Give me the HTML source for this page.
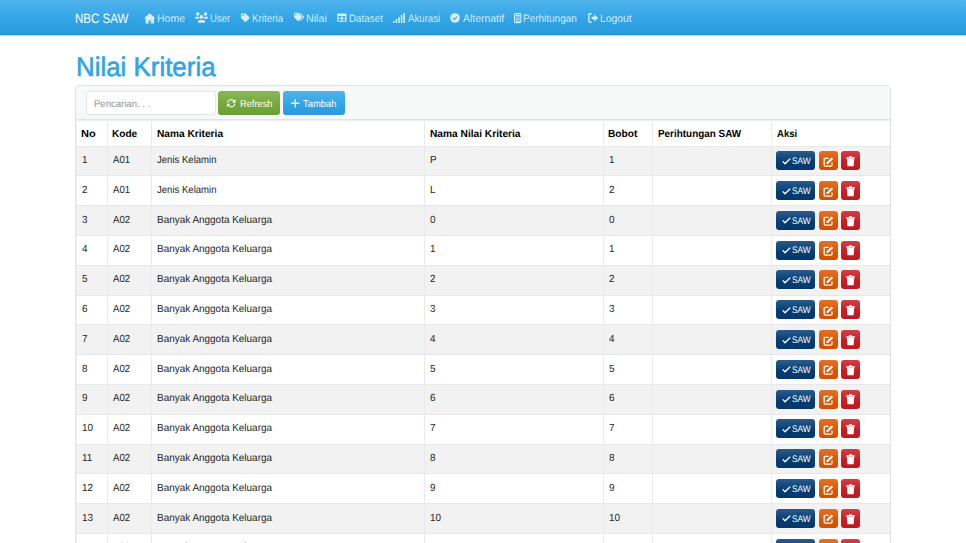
<!DOCTYPE html>
<html><head><meta charset="utf-8"><title>Nilai Kriteria</title><style>
html,body{margin:0;padding:0;background:#fff;width:966px;height:543px;overflow:hidden;position:relative;font-family:"Liberation Sans",sans-serif;text-rendering:geometricPrecision}
.t{position:absolute;white-space:nowrap;transform-origin:0 0}
.i{position:absolute;overflow:visible}
#nav{position:absolute;left:0;top:0;width:966px;height:34px;background:linear-gradient(#50b3eb,#2fa4e7 60%,#2c9ad9);border-bottom:1px solid #2190d3;box-shadow:0 1px 0 rgba(33,144,211,0.3)}
#panel{position:absolute;left:75px;top:85px;width:814px;height:600px;border:1px solid #dfe2e5;border-radius:4px}
#phead{position:absolute;left:76px;top:86px;width:814px;height:33px;background:#f7f8f8;border-bottom:1px solid #e1e3e5;border-radius:3px 3px 0 0}
#tline{position:absolute;left:76px;top:120px;width:814px;height:1px;background:#eceef0}
#search{position:absolute;left:86px;top:91px;width:128px;height:22px;background:#fff;border:1px solid #e3e5e8;border-radius:3px}
.btn{position:absolute;border-radius:3px;box-sizing:border-box}
.ok{background:linear-gradient(#8ab659,#73a839 60%,#6c9e36)}
.pr{background:linear-gradient(#50b3eb,#2fa4e7 60%,#2c9ad9)}
.info{background:linear-gradient(#2b5b8a,#033c73 60%,#03386c)}
.warn{background:linear-gradient(#e27129,#dd5600 60%,#d05100)}
.dang{background:linear-gradient(#d04045,#c71c22 60%,#bb1a20)}
.stripe{position:absolute;left:76px;width:814px;background:#f2f2f2}
.hl{position:absolute;left:76px;width:814px;height:1px;background:#e6e8ea}
.vl{position:absolute;top:120px;width:1px;height:430px;background:#e8ebee}
</style></head>
<body>
<div id="nav"></div>
<div class="t" style="left:74.69px;top:10.80px;font-size:13.6px;line-height:15px;color:#fff;transform:scaleX(0.8480);">NBC SAW</div>
<svg class="i" style="left:144px;top:12.5px;width:11.5px;height:10.5px" viewBox="0 0 23 21"><path fill="rgba(255,255,255,0.8)" d="M11.5 0.3L23 10.6H20V21H13.6V15.2H9.4V21H3V10.6H0Z"/></svg>
<div class="t" style="left:157.42px;top:13.00px;font-size:10.8px;line-height:12px;color:rgba(255,255,255,0.8);transform:scaleX(0.9715);">Home</div>
<svg class="i" style="left:192px;top:10px;width:20px;height:15px" viewBox="0 0 20 15"><g fill="rgba(255,255,255,0.8)"><circle cx="5.7" cy="4.1" r="1.75"/><circle cx="13.5" cy="4.1" r="1.75"/><rect x="3" y="6.7" width="4.3" height="2.1" rx="1"/><rect x="11.9" y="6.7" width="4.2" height="2.1" rx="1"/><circle cx="9.5" cy="6.9" r="1.9"/><path d="M5.9 12.8V11.7Q5.9 9.9 7.7 9.9H11.3Q13.1 9.9 13.1 11.7V12.8Z"/></g></svg>
<div class="t" style="left:210.30px;top:13.00px;font-size:10.8px;line-height:12px;color:rgba(255,255,255,0.8);transform:scaleX(0.8824);">User</div>
<svg class="i" style="left:240.7px;top:12.6px;width:8.6px;height:9.6px" viewBox="0 0 512 512"><path fill="rgba(255,255,255,0.8)" d="M0 252.118V48C0 21.49 21.49 0 48 0h204.118a48 48 0 0 1 33.941 14.059l211.882 211.882c18.745 18.745 18.745 49.137 0 67.882L293.823 497.941c-18.745 18.745-49.137 18.745-67.882 0L14.059 286.059A48 48 0 0 1 0 252.118zM112 64c-26.51 0-48 21.49-48 48s21.49 48 48 48 48-21.49 48-48-21.49-48-48-48z"/></svg>
<div class="t" style="left:251.95px;top:13.00px;font-size:10.8px;line-height:12px;color:rgba(255,255,255,0.8);transform:scaleX(0.9091);">Kriteria</div>
<svg class="i" style="left:294px;top:12.3px;width:10.3px;height:9.9px" viewBox="0 0 640 512"><path fill="rgba(255,255,255,0.8)" d="M497.941 225.941L286.059 14.059A48 48 0 0 0 252.118 0H48C21.49 0 0 21.49 0 48v204.118a48 48 0 0 0 14.059 33.941l211.882 211.882c18.744 18.745 49.136 18.746 67.882 0l204.118-204.118c18.745-18.745 18.745-49.137 0-67.882zM112 160c-26.51 0-48-21.49-48-48s21.49-48 48-48 48 21.49 48 48-21.49 48-48 48zm513.941 133.823L421.823 497.941c-18.745 18.745-49.137 18.745-67.882 0l-.36-.36L527.64 323.522c16.999-16.999 26.36-39.6 26.36-63.64s-9.362-46.641-26.36-63.64L331.397 0h48.721a48 48 0 0 1 33.941 14.059l211.882 211.882c18.745 18.745 18.745 49.137 0 67.882z"/></svg>
<div class="t" style="left:305.73px;top:13.00px;font-size:10.8px;line-height:12px;color:rgba(255,255,255,0.8);transform:scaleX(0.9893);">Nilai</div>
<svg class="i" style="left:337px;top:12.6px;width:9.8px;height:9.4px" viewBox="0 0 512 512"><path fill="rgba(255,255,255,0.8)" d="M464 32H48C21.49 32 0 53.49 0 80v352c0 26.51 21.49 48 48 48h416c26.51 0 48-21.49 48-48V80c0-26.51-21.49-48-48-48zM224 416H64v-96h160v96zm0-160H64v-96h160v96zm224 160H288v-96h160v96zm0-160H288v-96h160v96z"/></svg>
<div class="t" style="left:348.80px;top:13.00px;font-size:10.8px;line-height:12px;color:rgba(255,255,255,0.8);transform:scaleX(0.9114);">Dataset</div>
<svg class="i" style="left:393px;top:12.5px;width:12px;height:10px" viewBox="0 0 12 10"><rect x="0.0" y="8" width="1.6" height="2" fill="rgba(255,255,255,0.8)"/><rect x="2.6" y="6" width="1.6" height="4" fill="rgba(255,255,255,0.8)"/><rect x="5.2" y="4" width="1.6" height="6" fill="rgba(255,255,255,0.8)"/><rect x="7.8" y="2" width="1.6" height="8" fill="rgba(255,255,255,0.8)"/><rect x="10.4" y="0" width="1.6" height="10" fill="rgba(255,255,255,0.8)"/></svg>
<div class="t" style="left:407.85px;top:13.00px;font-size:10.8px;line-height:12px;color:rgba(255,255,255,0.8);transform:scaleX(0.8940);">Akurasi</div>
<svg class="i" style="left:450px;top:12.8px;width:10px;height:10px" viewBox="0 0 10 10"><circle cx="5" cy="5" r="4.85" fill="rgba(255,255,255,0.8)"/><path d="M2.9 5.1L4.4 6.5L7.2 3.6" fill="none" stroke="#3aa7e8" stroke-width="1.15"/></svg>
<div class="t" style="left:463.00px;top:13.00px;font-size:10.8px;line-height:12px;color:rgba(255,255,255,0.8);transform:scaleX(0.9664);">Alternatif</div>
<svg class="i" style="left:514px;top:12.8px;width:7.4px;height:10.2px" viewBox="0 0 7.4 10.2"><rect x="0.55" y="0.55" width="6.3" height="9.1" rx="0.9" fill="none" stroke="rgba(255,255,255,0.8)" stroke-width="1.1"/><rect x="1.7" y="1.7" width="4" height="1.7" fill="rgba(255,255,255,0.8)"/><rect x="1.70" y="4.30" width="1.1" height="1.2" fill="rgba(255,255,255,0.8)"/><rect x="3.15" y="4.30" width="1.1" height="1.2" fill="rgba(255,255,255,0.8)"/><rect x="4.60" y="4.30" width="1.1" height="1.2" fill="rgba(255,255,255,0.8)"/><rect x="1.70" y="6.05" width="1.1" height="1.2" fill="rgba(255,255,255,0.8)"/><rect x="3.15" y="6.05" width="1.1" height="1.2" fill="rgba(255,255,255,0.8)"/><rect x="4.60" y="6.05" width="1.1" height="1.2" fill="rgba(255,255,255,0.8)"/><rect x="1.70" y="7.80" width="1.1" height="1.2" fill="rgba(255,255,255,0.8)"/><rect x="3.15" y="7.80" width="1.1" height="1.2" fill="rgba(255,255,255,0.8)"/><rect x="4.60" y="7.80" width="1.1" height="1.2" fill="rgba(255,255,255,0.8)"/></svg>
<div class="t" style="left:523.27px;top:13.00px;font-size:10.8px;line-height:12px;color:rgba(255,255,255,0.8);transform:scaleX(0.9243);">Perhitungan</div>
<svg class="i" style="left:587.5px;top:12.5px;width:10.5px;height:10px" viewBox="0 0 10.5 10"><path d="M3.6 0.8H1.9Q0.8 0.8 0.8 1.9V8.1Q0.8 9.2 1.9 9.2H3.6" fill="none" stroke="rgba(255,255,255,0.8)" stroke-width="1.4"/><path fill="rgba(255,255,255,0.8)" d="M3.6 3.7H6.2V1.4L10.2 5L6.2 8.6V6.3H3.6Z"/></svg>
<div class="t" style="left:599.60px;top:13.00px;font-size:10.8px;line-height:12px;color:rgba(255,255,255,0.8);transform:scaleX(0.9605);">Logout</div>
<div class="t" style="left:75.71px;top:51.50px;font-size:26.7px;line-height:30px;color:#2fa4e7;transform:scaleX(0.9700);-webkit-text-stroke:0.6px #2fa4e7;">Nilai Kriteria</div>
<div id="panel"></div><div id="phead"></div><div id="tline"></div>
<div id="search"></div>
<div class="t" style="left:93.98px;top:99.00px;font-size:10px;line-height:11px;color:#8f9399;transform:scaleX(0.9536);">Pencarian. . .</div>
<div class="btn ok" style="left:218px;top:91px;width:62px;height:23.5px"></div>
<svg class="i" style="left:226px;top:98px;width:10.5px;height:10.5px" viewBox="0 0 10.5 10.5"><path d="M1.6 4.7A3.6 3.6 0 0 1 8.1 3.2M8.9 5.8A3.6 3.6 0 0 1 2.4 7.3" fill="none" stroke="#fff" stroke-width="1.1"/><path d="M9.6 1.3V4.8H6.1Z M0.9 9.2V5.7H4.4Z" fill="#fff"/></svg>
<div class="t" style="left:239.98px;top:99.00px;font-size:10px;line-height:11px;color:#fff;transform:scaleX(0.9258);">Refresh</div>
<div class="btn pr" style="left:283px;top:91px;width:62px;height:23.5px"></div>
<svg class="i" style="left:291px;top:99px;width:8.4px;height:8.4px" viewBox="0 0 8.4 8.4"><path d="M4.2 0V8.4M0 4.2H8.4" stroke="#fff" stroke-width="1.15"/></svg>
<div class="t" style="left:303.00px;top:99.00px;font-size:10px;line-height:11px;color:#fff;transform:scaleX(0.9399);">Tambah</div>
<div class="stripe" style="top:146.00px;height:29.8px"></div>
<div class="stripe" style="top:205.60px;height:29.8px"></div>
<div class="stripe" style="top:265.20px;height:29.8px"></div>
<div class="stripe" style="top:324.80px;height:29.8px"></div>
<div class="stripe" style="top:384.40px;height:29.8px"></div>
<div class="stripe" style="top:444.00px;height:29.8px"></div>
<div class="stripe" style="top:503.60px;height:29.8px"></div>
<div class="hl" style="top:145.50px"></div>
<div class="hl" style="top:175.30px"></div>
<div class="hl" style="top:205.10px"></div>
<div class="hl" style="top:234.90px"></div>
<div class="hl" style="top:264.70px"></div>
<div class="hl" style="top:294.50px"></div>
<div class="hl" style="top:324.30px"></div>
<div class="hl" style="top:354.10px"></div>
<div class="hl" style="top:383.90px"></div>
<div class="hl" style="top:413.70px"></div>
<div class="hl" style="top:443.50px"></div>
<div class="hl" style="top:473.30px"></div>
<div class="hl" style="top:503.10px"></div>
<div class="hl" style="top:532.90px"></div>
<div class="hl" style="top:562.70px"></div>
<div class="vl" style="left:107px"></div>
<div class="vl" style="left:151px"></div>
<div class="vl" style="left:424px"></div>
<div class="vl" style="left:603px"></div>
<div class="vl" style="left:652px"></div>
<div class="vl" style="left:771px"></div>
<div class="vl" style="left:76px;background:#f0f2f4"></div>
<div class="t" style="left:80.93px;top:129.00px;font-size:10.3px;line-height:11px;color:#000;font-weight:bold;transform:scaleX(1.0709);">No</div>
<div class="t" style="left:112.40px;top:129.00px;font-size:10.3px;line-height:11px;color:#000;font-weight:bold;transform:scaleX(0.9772);">Kode</div>
<div class="t" style="left:156.54px;top:129.00px;font-size:10.3px;line-height:11px;color:#000;font-weight:bold;transform:scaleX(0.9860);">Nama Kriteria</div>
<div class="t" style="left:429.53px;top:129.00px;font-size:10.3px;line-height:11px;color:#000;font-weight:bold;transform:scaleX(0.9883);">Nama Nilai Kriteria</div>
<div class="t" style="left:607.75px;top:129.00px;font-size:10.3px;line-height:11px;color:#000;font-weight:bold;transform:scaleX(0.9856);">Bobot</div>
<div class="t" style="left:657.55px;top:129.00px;font-size:10.3px;line-height:11px;color:#000;font-weight:bold;transform:scaleX(0.9624);">Perihtungan SAW</div>
<div class="t" style="left:776.67px;top:129.00px;font-size:10.3px;line-height:11px;color:#000;font-weight:bold;transform:scaleX(0.9247);">Aksi</div>
<div class="t" style="left:82.00px;top:155.00px;font-size:10.3px;line-height:11px;color:#212529;transform:scaleX(0.9600);">1</div>
<div class="t" style="left:112.88px;top:155.00px;font-size:10.3px;line-height:11px;color:#212529;transform:scaleX(0.9288);">A01</div>
<div class="t" style="left:156.88px;top:155.00px;font-size:10.3px;line-height:11px;color:#212529;transform:scaleX(0.9288);">Jenis Kelamin</div>
<div class="t" style="left:430.00px;top:155.00px;font-size:10.3px;line-height:11px;color:#212529;transform:scaleX(0.9600);">P</div>
<div class="t" style="left:609.00px;top:155.00px;font-size:10.3px;line-height:11px;color:#212529;transform:scaleX(0.9600);">1</div>
<div class="btn info" style="left:776px;top:151.20px;width:39px;height:19px"></div>
<svg class="i" style="left:782px;top:157.70px;width:9px;height:7px" viewBox="0 0 9 7"><path d="M0.7 3.4L3 5.8L8.2 0.8" fill="none" stroke="#fff" stroke-width="1.35"/></svg>
<div class="t" style="left:792.00px;top:156.00px;font-size:9.5px;line-height:11px;color:#fff;transform:scaleX(0.8800);">SAW</div>
<div class="btn warn" style="left:819px;top:151.20px;width:19px;height:19px"></div>
<svg class="i" style="left:823px;top:155.70px;width:11px;height:11px" viewBox="0 0 11 11"><path d="M5.6 2.3H2.3Q1.2 2.3 1.2 3.4V9.1Q1.2 10.2 2.3 10.2H7.9Q9 10.2 9 9.1V6.6" fill="none" stroke="#fff" stroke-width="1.3"/><path d="M3.3 8.2L3.8 6.2L8.6 1.4L10.1 2.9L5.3 7.7Z" fill="#fff"/></svg>
<div class="btn dang" style="left:841px;top:151.20px;width:19px;height:19px"></div>
<svg class="i" style="left:846px;top:155.90px;width:9px;height:11px" viewBox="0 0 9 11"><path d="M0.3 1.3H8.8V2.7H0.3Z M3 0.3H6V1.5H3Z M0.9 3.1H8.2L7.6 10.2H1.5Z" fill="#fff"/></svg>
<div class="t" style="left:82.00px;top:185.00px;font-size:10.3px;line-height:11px;color:#212529;transform:scaleX(0.9600);">2</div>
<div class="t" style="left:112.88px;top:185.00px;font-size:10.3px;line-height:11px;color:#212529;transform:scaleX(0.9288);">A01</div>
<div class="t" style="left:156.88px;top:185.00px;font-size:10.3px;line-height:11px;color:#212529;transform:scaleX(0.9288);">Jenis Kelamin</div>
<div class="t" style="left:430.00px;top:185.00px;font-size:10.3px;line-height:11px;color:#212529;transform:scaleX(0.9600);">L</div>
<div class="t" style="left:609.00px;top:185.00px;font-size:10.3px;line-height:11px;color:#212529;transform:scaleX(0.9600);">2</div>
<div class="btn info" style="left:776px;top:181.00px;width:39px;height:19px"></div>
<svg class="i" style="left:782px;top:187.50px;width:9px;height:7px" viewBox="0 0 9 7"><path d="M0.7 3.4L3 5.8L8.2 0.8" fill="none" stroke="#fff" stroke-width="1.35"/></svg>
<div class="t" style="left:792.00px;top:186.00px;font-size:9.5px;line-height:11px;color:#fff;transform:scaleX(0.8800);">SAW</div>
<div class="btn warn" style="left:819px;top:181.00px;width:19px;height:19px"></div>
<svg class="i" style="left:823px;top:185.50px;width:11px;height:11px" viewBox="0 0 11 11"><path d="M5.6 2.3H2.3Q1.2 2.3 1.2 3.4V9.1Q1.2 10.2 2.3 10.2H7.9Q9 10.2 9 9.1V6.6" fill="none" stroke="#fff" stroke-width="1.3"/><path d="M3.3 8.2L3.8 6.2L8.6 1.4L10.1 2.9L5.3 7.7Z" fill="#fff"/></svg>
<div class="btn dang" style="left:841px;top:181.00px;width:19px;height:19px"></div>
<svg class="i" style="left:846px;top:185.70px;width:9px;height:11px" viewBox="0 0 9 11"><path d="M0.3 1.3H8.8V2.7H0.3Z M3 0.3H6V1.5H3Z M0.9 3.1H8.2L7.6 10.2H1.5Z" fill="#fff"/></svg>
<div class="t" style="left:82.00px;top:215.00px;font-size:10.3px;line-height:11px;color:#212529;transform:scaleX(0.9600);">3</div>
<div class="t" style="left:112.86px;top:215.00px;font-size:10.3px;line-height:11px;color:#212529;transform:scaleX(0.9373);">A02</div>
<div class="t" style="left:156.73px;top:215.00px;font-size:10.3px;line-height:11px;color:#212529;transform:scaleX(0.9659);">Banyak Anggota Keluarga</div>
<div class="t" style="left:430.00px;top:215.00px;font-size:10.3px;line-height:11px;color:#212529;transform:scaleX(0.9600);">0</div>
<div class="t" style="left:609.00px;top:215.00px;font-size:10.3px;line-height:11px;color:#212529;transform:scaleX(0.9600);">0</div>
<div class="btn info" style="left:776px;top:210.80px;width:39px;height:19px"></div>
<svg class="i" style="left:782px;top:217.30px;width:9px;height:7px" viewBox="0 0 9 7"><path d="M0.7 3.4L3 5.8L8.2 0.8" fill="none" stroke="#fff" stroke-width="1.35"/></svg>
<div class="t" style="left:792.00px;top:216.00px;font-size:9.5px;line-height:11px;color:#fff;transform:scaleX(0.8800);">SAW</div>
<div class="btn warn" style="left:819px;top:210.80px;width:19px;height:19px"></div>
<svg class="i" style="left:823px;top:215.30px;width:11px;height:11px" viewBox="0 0 11 11"><path d="M5.6 2.3H2.3Q1.2 2.3 1.2 3.4V9.1Q1.2 10.2 2.3 10.2H7.9Q9 10.2 9 9.1V6.6" fill="none" stroke="#fff" stroke-width="1.3"/><path d="M3.3 8.2L3.8 6.2L8.6 1.4L10.1 2.9L5.3 7.7Z" fill="#fff"/></svg>
<div class="btn dang" style="left:841px;top:210.80px;width:19px;height:19px"></div>
<svg class="i" style="left:846px;top:215.50px;width:9px;height:11px" viewBox="0 0 9 11"><path d="M0.3 1.3H8.8V2.7H0.3Z M3 0.3H6V1.5H3Z M0.9 3.1H8.2L7.6 10.2H1.5Z" fill="#fff"/></svg>
<div class="t" style="left:82.00px;top:244.00px;font-size:10.3px;line-height:11px;color:#212529;transform:scaleX(0.9600);">4</div>
<div class="t" style="left:112.86px;top:244.00px;font-size:10.3px;line-height:11px;color:#212529;transform:scaleX(0.9373);">A02</div>
<div class="t" style="left:156.73px;top:244.00px;font-size:10.3px;line-height:11px;color:#212529;transform:scaleX(0.9659);">Banyak Anggota Keluarga</div>
<div class="t" style="left:430.00px;top:244.00px;font-size:10.3px;line-height:11px;color:#212529;transform:scaleX(0.9600);">1</div>
<div class="t" style="left:609.00px;top:244.00px;font-size:10.3px;line-height:11px;color:#212529;transform:scaleX(0.9600);">1</div>
<div class="btn info" style="left:776px;top:240.60px;width:39px;height:19px"></div>
<svg class="i" style="left:782px;top:247.10px;width:9px;height:7px" viewBox="0 0 9 7"><path d="M0.7 3.4L3 5.8L8.2 0.8" fill="none" stroke="#fff" stroke-width="1.35"/></svg>
<div class="t" style="left:792.00px;top:245.00px;font-size:9.5px;line-height:11px;color:#fff;transform:scaleX(0.8800);">SAW</div>
<div class="btn warn" style="left:819px;top:240.60px;width:19px;height:19px"></div>
<svg class="i" style="left:823px;top:245.10px;width:11px;height:11px" viewBox="0 0 11 11"><path d="M5.6 2.3H2.3Q1.2 2.3 1.2 3.4V9.1Q1.2 10.2 2.3 10.2H7.9Q9 10.2 9 9.1V6.6" fill="none" stroke="#fff" stroke-width="1.3"/><path d="M3.3 8.2L3.8 6.2L8.6 1.4L10.1 2.9L5.3 7.7Z" fill="#fff"/></svg>
<div class="btn dang" style="left:841px;top:240.60px;width:19px;height:19px"></div>
<svg class="i" style="left:846px;top:245.30px;width:9px;height:11px" viewBox="0 0 9 11"><path d="M0.3 1.3H8.8V2.7H0.3Z M3 0.3H6V1.5H3Z M0.9 3.1H8.2L7.6 10.2H1.5Z" fill="#fff"/></svg>
<div class="t" style="left:82.00px;top:274.00px;font-size:10.3px;line-height:11px;color:#212529;transform:scaleX(0.9600);">5</div>
<div class="t" style="left:112.86px;top:274.00px;font-size:10.3px;line-height:11px;color:#212529;transform:scaleX(0.9373);">A02</div>
<div class="t" style="left:156.73px;top:274.00px;font-size:10.3px;line-height:11px;color:#212529;transform:scaleX(0.9659);">Banyak Anggota Keluarga</div>
<div class="t" style="left:430.00px;top:274.00px;font-size:10.3px;line-height:11px;color:#212529;transform:scaleX(0.9600);">2</div>
<div class="t" style="left:609.00px;top:274.00px;font-size:10.3px;line-height:11px;color:#212529;transform:scaleX(0.9600);">2</div>
<div class="btn info" style="left:776px;top:270.40px;width:39px;height:19px"></div>
<svg class="i" style="left:782px;top:276.90px;width:9px;height:7px" viewBox="0 0 9 7"><path d="M0.7 3.4L3 5.8L8.2 0.8" fill="none" stroke="#fff" stroke-width="1.35"/></svg>
<div class="t" style="left:792.00px;top:275.00px;font-size:9.5px;line-height:11px;color:#fff;transform:scaleX(0.8800);">SAW</div>
<div class="btn warn" style="left:819px;top:270.40px;width:19px;height:19px"></div>
<svg class="i" style="left:823px;top:274.90px;width:11px;height:11px" viewBox="0 0 11 11"><path d="M5.6 2.3H2.3Q1.2 2.3 1.2 3.4V9.1Q1.2 10.2 2.3 10.2H7.9Q9 10.2 9 9.1V6.6" fill="none" stroke="#fff" stroke-width="1.3"/><path d="M3.3 8.2L3.8 6.2L8.6 1.4L10.1 2.9L5.3 7.7Z" fill="#fff"/></svg>
<div class="btn dang" style="left:841px;top:270.40px;width:19px;height:19px"></div>
<svg class="i" style="left:846px;top:275.10px;width:9px;height:11px" viewBox="0 0 9 11"><path d="M0.3 1.3H8.8V2.7H0.3Z M3 0.3H6V1.5H3Z M0.9 3.1H8.2L7.6 10.2H1.5Z" fill="#fff"/></svg>
<div class="t" style="left:82.00px;top:304.00px;font-size:10.3px;line-height:11px;color:#212529;transform:scaleX(0.9600);">6</div>
<div class="t" style="left:112.86px;top:304.00px;font-size:10.3px;line-height:11px;color:#212529;transform:scaleX(0.9373);">A02</div>
<div class="t" style="left:156.73px;top:304.00px;font-size:10.3px;line-height:11px;color:#212529;transform:scaleX(0.9659);">Banyak Anggota Keluarga</div>
<div class="t" style="left:430.00px;top:304.00px;font-size:10.3px;line-height:11px;color:#212529;transform:scaleX(0.9600);">3</div>
<div class="t" style="left:609.00px;top:304.00px;font-size:10.3px;line-height:11px;color:#212529;transform:scaleX(0.9600);">3</div>
<div class="btn info" style="left:776px;top:300.20px;width:39px;height:19px"></div>
<svg class="i" style="left:782px;top:306.70px;width:9px;height:7px" viewBox="0 0 9 7"><path d="M0.7 3.4L3 5.8L8.2 0.8" fill="none" stroke="#fff" stroke-width="1.35"/></svg>
<div class="t" style="left:792.00px;top:305.00px;font-size:9.5px;line-height:11px;color:#fff;transform:scaleX(0.8800);">SAW</div>
<div class="btn warn" style="left:819px;top:300.20px;width:19px;height:19px"></div>
<svg class="i" style="left:823px;top:304.70px;width:11px;height:11px" viewBox="0 0 11 11"><path d="M5.6 2.3H2.3Q1.2 2.3 1.2 3.4V9.1Q1.2 10.2 2.3 10.2H7.9Q9 10.2 9 9.1V6.6" fill="none" stroke="#fff" stroke-width="1.3"/><path d="M3.3 8.2L3.8 6.2L8.6 1.4L10.1 2.9L5.3 7.7Z" fill="#fff"/></svg>
<div class="btn dang" style="left:841px;top:300.20px;width:19px;height:19px"></div>
<svg class="i" style="left:846px;top:304.90px;width:9px;height:11px" viewBox="0 0 9 11"><path d="M0.3 1.3H8.8V2.7H0.3Z M3 0.3H6V1.5H3Z M0.9 3.1H8.2L7.6 10.2H1.5Z" fill="#fff"/></svg>
<div class="t" style="left:82.00px;top:334.00px;font-size:10.3px;line-height:11px;color:#212529;transform:scaleX(0.9600);">7</div>
<div class="t" style="left:112.86px;top:334.00px;font-size:10.3px;line-height:11px;color:#212529;transform:scaleX(0.9373);">A02</div>
<div class="t" style="left:156.73px;top:334.00px;font-size:10.3px;line-height:11px;color:#212529;transform:scaleX(0.9659);">Banyak Anggota Keluarga</div>
<div class="t" style="left:430.00px;top:334.00px;font-size:10.3px;line-height:11px;color:#212529;transform:scaleX(0.9600);">4</div>
<div class="t" style="left:609.00px;top:334.00px;font-size:10.3px;line-height:11px;color:#212529;transform:scaleX(0.9600);">4</div>
<div class="btn info" style="left:776px;top:330.00px;width:39px;height:19px"></div>
<svg class="i" style="left:782px;top:336.50px;width:9px;height:7px" viewBox="0 0 9 7"><path d="M0.7 3.4L3 5.8L8.2 0.8" fill="none" stroke="#fff" stroke-width="1.35"/></svg>
<div class="t" style="left:792.00px;top:335.00px;font-size:9.5px;line-height:11px;color:#fff;transform:scaleX(0.8800);">SAW</div>
<div class="btn warn" style="left:819px;top:330.00px;width:19px;height:19px"></div>
<svg class="i" style="left:823px;top:334.50px;width:11px;height:11px" viewBox="0 0 11 11"><path d="M5.6 2.3H2.3Q1.2 2.3 1.2 3.4V9.1Q1.2 10.2 2.3 10.2H7.9Q9 10.2 9 9.1V6.6" fill="none" stroke="#fff" stroke-width="1.3"/><path d="M3.3 8.2L3.8 6.2L8.6 1.4L10.1 2.9L5.3 7.7Z" fill="#fff"/></svg>
<div class="btn dang" style="left:841px;top:330.00px;width:19px;height:19px"></div>
<svg class="i" style="left:846px;top:334.70px;width:9px;height:11px" viewBox="0 0 9 11"><path d="M0.3 1.3H8.8V2.7H0.3Z M3 0.3H6V1.5H3Z M0.9 3.1H8.2L7.6 10.2H1.5Z" fill="#fff"/></svg>
<div class="t" style="left:82.00px;top:364.00px;font-size:10.3px;line-height:11px;color:#212529;transform:scaleX(0.9600);">8</div>
<div class="t" style="left:112.86px;top:364.00px;font-size:10.3px;line-height:11px;color:#212529;transform:scaleX(0.9373);">A02</div>
<div class="t" style="left:156.73px;top:364.00px;font-size:10.3px;line-height:11px;color:#212529;transform:scaleX(0.9659);">Banyak Anggota Keluarga</div>
<div class="t" style="left:430.00px;top:364.00px;font-size:10.3px;line-height:11px;color:#212529;transform:scaleX(0.9600);">5</div>
<div class="t" style="left:609.00px;top:364.00px;font-size:10.3px;line-height:11px;color:#212529;transform:scaleX(0.9600);">5</div>
<div class="btn info" style="left:776px;top:359.80px;width:39px;height:19px"></div>
<svg class="i" style="left:782px;top:366.30px;width:9px;height:7px" viewBox="0 0 9 7"><path d="M0.7 3.4L3 5.8L8.2 0.8" fill="none" stroke="#fff" stroke-width="1.35"/></svg>
<div class="t" style="left:792.00px;top:365.00px;font-size:9.5px;line-height:11px;color:#fff;transform:scaleX(0.8800);">SAW</div>
<div class="btn warn" style="left:819px;top:359.80px;width:19px;height:19px"></div>
<svg class="i" style="left:823px;top:364.30px;width:11px;height:11px" viewBox="0 0 11 11"><path d="M5.6 2.3H2.3Q1.2 2.3 1.2 3.4V9.1Q1.2 10.2 2.3 10.2H7.9Q9 10.2 9 9.1V6.6" fill="none" stroke="#fff" stroke-width="1.3"/><path d="M3.3 8.2L3.8 6.2L8.6 1.4L10.1 2.9L5.3 7.7Z" fill="#fff"/></svg>
<div class="btn dang" style="left:841px;top:359.80px;width:19px;height:19px"></div>
<svg class="i" style="left:846px;top:364.50px;width:9px;height:11px" viewBox="0 0 9 11"><path d="M0.3 1.3H8.8V2.7H0.3Z M3 0.3H6V1.5H3Z M0.9 3.1H8.2L7.6 10.2H1.5Z" fill="#fff"/></svg>
<div class="t" style="left:82.00px;top:393.00px;font-size:10.3px;line-height:11px;color:#212529;transform:scaleX(0.9600);">9</div>
<div class="t" style="left:112.86px;top:393.00px;font-size:10.3px;line-height:11px;color:#212529;transform:scaleX(0.9373);">A02</div>
<div class="t" style="left:156.73px;top:393.00px;font-size:10.3px;line-height:11px;color:#212529;transform:scaleX(0.9659);">Banyak Anggota Keluarga</div>
<div class="t" style="left:430.00px;top:393.00px;font-size:10.3px;line-height:11px;color:#212529;transform:scaleX(0.9600);">6</div>
<div class="t" style="left:609.00px;top:393.00px;font-size:10.3px;line-height:11px;color:#212529;transform:scaleX(0.9600);">6</div>
<div class="btn info" style="left:776px;top:389.60px;width:39px;height:19px"></div>
<svg class="i" style="left:782px;top:396.10px;width:9px;height:7px" viewBox="0 0 9 7"><path d="M0.7 3.4L3 5.8L8.2 0.8" fill="none" stroke="#fff" stroke-width="1.35"/></svg>
<div class="t" style="left:792.00px;top:394.00px;font-size:9.5px;line-height:11px;color:#fff;transform:scaleX(0.8800);">SAW</div>
<div class="btn warn" style="left:819px;top:389.60px;width:19px;height:19px"></div>
<svg class="i" style="left:823px;top:394.10px;width:11px;height:11px" viewBox="0 0 11 11"><path d="M5.6 2.3H2.3Q1.2 2.3 1.2 3.4V9.1Q1.2 10.2 2.3 10.2H7.9Q9 10.2 9 9.1V6.6" fill="none" stroke="#fff" stroke-width="1.3"/><path d="M3.3 8.2L3.8 6.2L8.6 1.4L10.1 2.9L5.3 7.7Z" fill="#fff"/></svg>
<div class="btn dang" style="left:841px;top:389.60px;width:19px;height:19px"></div>
<svg class="i" style="left:846px;top:394.30px;width:9px;height:11px" viewBox="0 0 9 11"><path d="M0.3 1.3H8.8V2.7H0.3Z M3 0.3H6V1.5H3Z M0.9 3.1H8.2L7.6 10.2H1.5Z" fill="#fff"/></svg>
<div class="t" style="left:82.00px;top:423.00px;font-size:10.3px;line-height:11px;color:#212529;transform:scaleX(0.9600);">10</div>
<div class="t" style="left:112.86px;top:423.00px;font-size:10.3px;line-height:11px;color:#212529;transform:scaleX(0.9373);">A02</div>
<div class="t" style="left:156.73px;top:423.00px;font-size:10.3px;line-height:11px;color:#212529;transform:scaleX(0.9659);">Banyak Anggota Keluarga</div>
<div class="t" style="left:430.00px;top:423.00px;font-size:10.3px;line-height:11px;color:#212529;transform:scaleX(0.9600);">7</div>
<div class="t" style="left:609.00px;top:423.00px;font-size:10.3px;line-height:11px;color:#212529;transform:scaleX(0.9600);">7</div>
<div class="btn info" style="left:776px;top:419.40px;width:39px;height:19px"></div>
<svg class="i" style="left:782px;top:425.90px;width:9px;height:7px" viewBox="0 0 9 7"><path d="M0.7 3.4L3 5.8L8.2 0.8" fill="none" stroke="#fff" stroke-width="1.35"/></svg>
<div class="t" style="left:792.00px;top:424.00px;font-size:9.5px;line-height:11px;color:#fff;transform:scaleX(0.8800);">SAW</div>
<div class="btn warn" style="left:819px;top:419.40px;width:19px;height:19px"></div>
<svg class="i" style="left:823px;top:423.90px;width:11px;height:11px" viewBox="0 0 11 11"><path d="M5.6 2.3H2.3Q1.2 2.3 1.2 3.4V9.1Q1.2 10.2 2.3 10.2H7.9Q9 10.2 9 9.1V6.6" fill="none" stroke="#fff" stroke-width="1.3"/><path d="M3.3 8.2L3.8 6.2L8.6 1.4L10.1 2.9L5.3 7.7Z" fill="#fff"/></svg>
<div class="btn dang" style="left:841px;top:419.40px;width:19px;height:19px"></div>
<svg class="i" style="left:846px;top:424.10px;width:9px;height:11px" viewBox="0 0 9 11"><path d="M0.3 1.3H8.8V2.7H0.3Z M3 0.3H6V1.5H3Z M0.9 3.1H8.2L7.6 10.2H1.5Z" fill="#fff"/></svg>
<div class="t" style="left:82.00px;top:453.00px;font-size:10.3px;line-height:11px;color:#212529;transform:scaleX(0.9600);">11</div>
<div class="t" style="left:112.86px;top:453.00px;font-size:10.3px;line-height:11px;color:#212529;transform:scaleX(0.9373);">A02</div>
<div class="t" style="left:156.73px;top:453.00px;font-size:10.3px;line-height:11px;color:#212529;transform:scaleX(0.9659);">Banyak Anggota Keluarga</div>
<div class="t" style="left:430.00px;top:453.00px;font-size:10.3px;line-height:11px;color:#212529;transform:scaleX(0.9600);">8</div>
<div class="t" style="left:609.00px;top:453.00px;font-size:10.3px;line-height:11px;color:#212529;transform:scaleX(0.9600);">8</div>
<div class="btn info" style="left:776px;top:449.20px;width:39px;height:19px"></div>
<svg class="i" style="left:782px;top:455.70px;width:9px;height:7px" viewBox="0 0 9 7"><path d="M0.7 3.4L3 5.8L8.2 0.8" fill="none" stroke="#fff" stroke-width="1.35"/></svg>
<div class="t" style="left:792.00px;top:454.00px;font-size:9.5px;line-height:11px;color:#fff;transform:scaleX(0.8800);">SAW</div>
<div class="btn warn" style="left:819px;top:449.20px;width:19px;height:19px"></div>
<svg class="i" style="left:823px;top:453.70px;width:11px;height:11px" viewBox="0 0 11 11"><path d="M5.6 2.3H2.3Q1.2 2.3 1.2 3.4V9.1Q1.2 10.2 2.3 10.2H7.9Q9 10.2 9 9.1V6.6" fill="none" stroke="#fff" stroke-width="1.3"/><path d="M3.3 8.2L3.8 6.2L8.6 1.4L10.1 2.9L5.3 7.7Z" fill="#fff"/></svg>
<div class="btn dang" style="left:841px;top:449.20px;width:19px;height:19px"></div>
<svg class="i" style="left:846px;top:453.90px;width:9px;height:11px" viewBox="0 0 9 11"><path d="M0.3 1.3H8.8V2.7H0.3Z M3 0.3H6V1.5H3Z M0.9 3.1H8.2L7.6 10.2H1.5Z" fill="#fff"/></svg>
<div class="t" style="left:82.00px;top:483.00px;font-size:10.3px;line-height:11px;color:#212529;transform:scaleX(0.9600);">12</div>
<div class="t" style="left:112.86px;top:483.00px;font-size:10.3px;line-height:11px;color:#212529;transform:scaleX(0.9373);">A02</div>
<div class="t" style="left:156.73px;top:483.00px;font-size:10.3px;line-height:11px;color:#212529;transform:scaleX(0.9659);">Banyak Anggota Keluarga</div>
<div class="t" style="left:430.00px;top:483.00px;font-size:10.3px;line-height:11px;color:#212529;transform:scaleX(0.9600);">9</div>
<div class="t" style="left:609.00px;top:483.00px;font-size:10.3px;line-height:11px;color:#212529;transform:scaleX(0.9600);">9</div>
<div class="btn info" style="left:776px;top:479.00px;width:39px;height:19px"></div>
<svg class="i" style="left:782px;top:485.50px;width:9px;height:7px" viewBox="0 0 9 7"><path d="M0.7 3.4L3 5.8L8.2 0.8" fill="none" stroke="#fff" stroke-width="1.35"/></svg>
<div class="t" style="left:792.00px;top:484.00px;font-size:9.5px;line-height:11px;color:#fff;transform:scaleX(0.8800);">SAW</div>
<div class="btn warn" style="left:819px;top:479.00px;width:19px;height:19px"></div>
<svg class="i" style="left:823px;top:483.50px;width:11px;height:11px" viewBox="0 0 11 11"><path d="M5.6 2.3H2.3Q1.2 2.3 1.2 3.4V9.1Q1.2 10.2 2.3 10.2H7.9Q9 10.2 9 9.1V6.6" fill="none" stroke="#fff" stroke-width="1.3"/><path d="M3.3 8.2L3.8 6.2L8.6 1.4L10.1 2.9L5.3 7.7Z" fill="#fff"/></svg>
<div class="btn dang" style="left:841px;top:479.00px;width:19px;height:19px"></div>
<svg class="i" style="left:846px;top:483.70px;width:9px;height:11px" viewBox="0 0 9 11"><path d="M0.3 1.3H8.8V2.7H0.3Z M3 0.3H6V1.5H3Z M0.9 3.1H8.2L7.6 10.2H1.5Z" fill="#fff"/></svg>
<div class="t" style="left:82.00px;top:513.00px;font-size:10.3px;line-height:11px;color:#212529;transform:scaleX(0.9600);">13</div>
<div class="t" style="left:112.86px;top:513.00px;font-size:10.3px;line-height:11px;color:#212529;transform:scaleX(0.9373);">A02</div>
<div class="t" style="left:156.73px;top:513.00px;font-size:10.3px;line-height:11px;color:#212529;transform:scaleX(0.9659);">Banyak Anggota Keluarga</div>
<div class="t" style="left:430.00px;top:513.00px;font-size:10.3px;line-height:11px;color:#212529;transform:scaleX(0.9600);">10</div>
<div class="t" style="left:609.00px;top:513.00px;font-size:10.3px;line-height:11px;color:#212529;transform:scaleX(0.9600);">10</div>
<div class="btn info" style="left:776px;top:508.80px;width:39px;height:19px"></div>
<svg class="i" style="left:782px;top:515.30px;width:9px;height:7px" viewBox="0 0 9 7"><path d="M0.7 3.4L3 5.8L8.2 0.8" fill="none" stroke="#fff" stroke-width="1.35"/></svg>
<div class="t" style="left:792.00px;top:514.00px;font-size:9.5px;line-height:11px;color:#fff;transform:scaleX(0.8800);">SAW</div>
<div class="btn warn" style="left:819px;top:508.80px;width:19px;height:19px"></div>
<svg class="i" style="left:823px;top:513.30px;width:11px;height:11px" viewBox="0 0 11 11"><path d="M5.6 2.3H2.3Q1.2 2.3 1.2 3.4V9.1Q1.2 10.2 2.3 10.2H7.9Q9 10.2 9 9.1V6.6" fill="none" stroke="#fff" stroke-width="1.3"/><path d="M3.3 8.2L3.8 6.2L8.6 1.4L10.1 2.9L5.3 7.7Z" fill="#fff"/></svg>
<div class="btn dang" style="left:841px;top:508.80px;width:19px;height:19px"></div>
<svg class="i" style="left:846px;top:513.50px;width:9px;height:11px" viewBox="0 0 9 11"><path d="M0.3 1.3H8.8V2.7H0.3Z M3 0.3H6V1.5H3Z M0.9 3.1H8.2L7.6 10.2H1.5Z" fill="#fff"/></svg>
<div class="t" style="left:82.00px;top:542.00px;font-size:10.3px;line-height:11px;color:#212529;transform:scaleX(0.9600);">14</div>
<div class="t" style="left:112.86px;top:542.00px;font-size:10.3px;line-height:11px;color:#212529;transform:scaleX(0.9373);">A02</div>
<div class="t" style="left:156.73px;top:542.00px;font-size:10.3px;line-height:11px;color:#212529;transform:scaleX(0.9659);">Banyak Anggota Keluarga</div>
<div class="t" style="left:430.00px;top:542.00px;font-size:10.3px;line-height:11px;color:#212529;transform:scaleX(0.9600);">11</div>
<div class="t" style="left:609.00px;top:542.00px;font-size:10.3px;line-height:11px;color:#212529;transform:scaleX(0.9600);">11</div>
<div class="btn info" style="left:776px;top:538.60px;width:39px;height:19px"></div>
<svg class="i" style="left:782px;top:545.10px;width:9px;height:7px" viewBox="0 0 9 7"><path d="M0.7 3.4L3 5.8L8.2 0.8" fill="none" stroke="#fff" stroke-width="1.35"/></svg>
<div class="t" style="left:792.00px;top:543.00px;font-size:9.5px;line-height:11px;color:#fff;transform:scaleX(0.8800);">SAW</div>
<div class="btn warn" style="left:819px;top:538.60px;width:19px;height:19px"></div>
<svg class="i" style="left:823px;top:543.10px;width:11px;height:11px" viewBox="0 0 11 11"><path d="M5.6 2.3H2.3Q1.2 2.3 1.2 3.4V9.1Q1.2 10.2 2.3 10.2H7.9Q9 10.2 9 9.1V6.6" fill="none" stroke="#fff" stroke-width="1.3"/><path d="M3.3 8.2L3.8 6.2L8.6 1.4L10.1 2.9L5.3 7.7Z" fill="#fff"/></svg>
<div class="btn dang" style="left:841px;top:538.60px;width:19px;height:19px"></div>
<svg class="i" style="left:846px;top:543.30px;width:9px;height:11px" viewBox="0 0 9 11"><path d="M0.3 1.3H8.8V2.7H0.3Z M3 0.3H6V1.5H3Z M0.9 3.1H8.2L7.6 10.2H1.5Z" fill="#fff"/></svg>
</body></html>
